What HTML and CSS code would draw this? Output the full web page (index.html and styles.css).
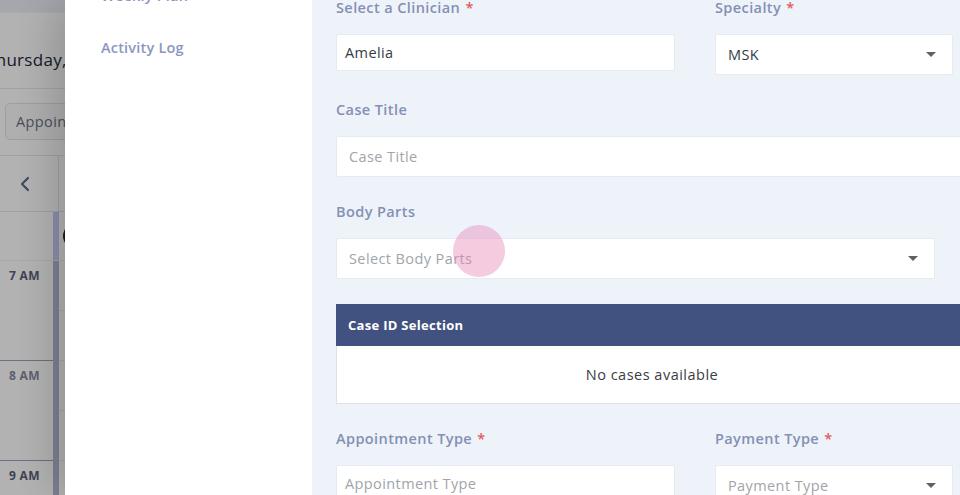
FILE: index.html
```html
<!DOCTYPE html>
<html lang="en">
<head>
<meta charset="utf-8">
<title>Appointment</title>
<link rel="stylesheet" href="styles.css">
</head>
<body>
<div class="calendar">
  <div class="cal-top"></div>
  <div class="cal-date"><span class="date-text">Thursday,</span></div>
  <div class="cal-toolbar"><button class="view-btn">Appointments</button></div>
  <div class="cal-nav">
    <span class="nav-prev"><svg width="12" height="16" viewBox="0 0 12 16"><path d="M9 2 L3 8 L9 14" fill="none" stroke="#5a6a8c" stroke-width="2.2" stroke-linecap="round" stroke-linejoin="round"/></svg></span>
    <span class="nav-sep"></span>
  </div>
  <div class="cal-grid">
    <div class="cal-head"><div class="time-head"></div><div class="bar bar-head"></div><div class="day-head"><span class="avatar"></span></div></div>
    <div class="cal-row"><div class="time">7 AM</div><div class="bar"></div><div class="slot"><div class="half"></div><div class="half"></div></div></div>
    <div class="cal-row"><div class="time time-muted">8 AM</div><div class="bar"></div><div class="slot"><div class="half"></div><div class="half"></div></div></div>
    <div class="cal-row"><div class="time">9 AM</div><div class="bar"></div><div class="slot"><div class="half"></div><div class="half"></div></div></div>
  </div>
</div>
<div class="backdrop"></div>
<aside class="drawer">
  <nav class="drawer-nav">
    <a class="nav-item">Weekly Plan</a>
    <a class="nav-item">Activity Log</a>
  </nav>
  <section class="drawer-form">
    <div class="form">
      <div class="row-2">
        <div class="group col-a">
          <label class="label">Select a Clinician <span class="req">*</span></label>
          <div class="control control-sm"><span class="value">Amelia</span></div>
        </div>
        <div class="group col-b">
          <label class="label">Specialty <span class="req">*</span></label>
          <div class="control select pad-lg"><span class="value">MSK</span><span class="caret"></span></div>
        </div>
      </div>
      <div class="group full">
        <label class="label">Case Title</label>
        <div class="control pad-lg"><span class="placeholder">Case Title</span></div>
      </div>
      <div class="group body-parts">
        <label class="label">Body Parts</label>
        <div class="control select pad-lg body-select"><span class="placeholder">Select Body Parts</span><span class="caret"></span></div>
      </div>
      <div class="case-table">
        <div class="case-head">Case ID Selection</div>
        <div class="case-body">No cases available</div>
      </div>
      <div class="row-2">
        <div class="group col-a">
          <label class="label">Appointment Type <span class="req">*</span></label>
          <div class="control control-sm"><span class="placeholder">Appointment Type</span></div>
        </div>
        <div class="group col-b">
          <label class="label">Payment Type <span class="req">*</span></label>
          <div class="control select pad-lg"><span class="placeholder">Payment Type</span><span class="caret"></span></div>
        </div>
      </div>
    </div>
  </section>
</aside>
<div class="tap-indicator"></div>
</body>
</html>
```
FILE: styles.css
```css
* { box-sizing: border-box; margin: 0; padding: 0; }
html, body { width: 960px; height: 495px; overflow: hidden; }
body {
  font-family: "Open Sans", "Liberation Sans", sans-serif;
  background: #fff;
  position: relative;
  color: #333;
}

/* ---------- background calendar ---------- */
.calendar { width: 960px; display: flex; flex-direction: column; background: #fff; }
.cal-top { height: 13px; background: #eceff6; border-bottom: 1px solid #f5f6f9; }
.cal-date { height: 75px; padding-top: 36px; }
.date-text {
  display: block;
  font-size: 17px;
  line-height: 22px;
  font-weight: 500;
  letter-spacing: 0.3px;
  color: #23273a;
  text-indent: -14px;
  white-space: nowrap;
}
.cal-toolbar { height: 67px; border-top: 1px solid #e8e9ed; padding: 14px 0 0 5px; }
.view-btn {
  height: 37px;
  width: 140px;
  padding-left: 10px;
  text-align: left;
  font-family: inherit;
  font-size: 14.5px;
  letter-spacing: 0.4px;
  color: #6a7184;
  background: #fbfbfb;
  border: 1px solid #e0e2e7;
  border-radius: 5px;
}
.cal-nav { height: 56px; border-top: 1px solid #e4e6eb; display: flex; align-items: center; }
.nav-prev { width: 58px; padding-left: 19px; display: flex; align-items: center; }
.nav-sep { width: 1px; align-self: stretch; background: #e2e4ea; }

.cal-grid { display: flex; flex-direction: column; border-top: 1px solid #e4e6eb; }
.cal-head { height: 49px; display: flex; border-bottom: 1px solid #eef0f4; }
.time-head { width: 53px; }
.bar { width: 6px; background: #b3b8d4; }
.bar-head { background: #c6ccf6; }
.day-head { flex: 1; display: flex; align-items: center; padding-left: 4px; }
.avatar { width: 24px; height: 24px; border-radius: 50%; background: #26232c; }

.cal-row { height: 100px; display: flex; }
.time {
  width: 53px;
  padding: 7px 0 0 9px;
  font-size: 12px;
  font-weight: 700;
  line-height: 16px;
  letter-spacing: 0.3px;
  color: #5a6277;
  border-bottom: 1px solid #9a9fb6;
}
.time-muted { color: #848aa0; }
.slot { flex: 1; display: flex; flex-direction: column; }
.half { flex: 1; border-bottom: 1px solid #ecedf1; }

.backdrop {
  position: fixed;
  inset: 0;
  background: rgba(0, 0, 0, 0.3);
}

/* ---------- drawer ---------- */
.drawer {
  position: fixed;
  top: 0;
  bottom: 0;
  left: 65px;
  right: 0;
  display: flex;
  box-shadow: -12px 0 40px rgba(0, 0, 0, 0.18);
}
.drawer-nav {
  width: 247px;
  background: #fff;
  padding: 0 0 0 36px;
  display: flex;
  flex-direction: column;
  gap: 32px;
  margin-top: -14px;
}
.nav-item {
  font-size: 14.5px;
  line-height: 20px;
  font-weight: 600;
  letter-spacing: 0.2px;
  color: #8b97c1;
}
.drawer-form {
  flex: 1;
  background: #eef3fa;
  padding-left: 24px;
  overflow: hidden;
}
.form { width: 632px; margin-top: -3px; }

.row-2 { display: flex; column-gap: 40px; }
.col-a { width: 339px; }
.col-b { width: 238px; }
.group { margin-bottom: 24px; }
.full { width: 632px; }
.body-parts { width: 599px; margin-bottom: 25px; }

.label {
  display: block;
  font-size: 14.5px;
  line-height: 21px;
  font-weight: 600;
  letter-spacing: 0.4px;
  color: #8490b4;
  margin-bottom: 16px;
}
.req { color: #e45a5a; margin-left: 1px; }

.control {
  height: 41px;
  background: #fff;
  border: 1px solid #e6eaf1;
  border-radius: 2px;
  display: flex;
  align-items: center;
  padding: 0 16px 0 12px;
  font-size: 14.5px;
  letter-spacing: 0.4px;
}
.control-sm { height: 37px; padding-left: 8px; }
.pad-lg { padding-left: 12px; }
.value { color: #363a44; }
.placeholder { color: #a2a4aa; }
.select { justify-content: space-between; }
.caret {
  width: 0;
  height: 0;
  border-left: 5px solid transparent;
  border-right: 5px solid transparent;
  border-top: 5px solid #5f6166;
}

.case-table { width: 632px; margin-bottom: 24px; }
.case-head {
  height: 42px;
  background: #415180;
  color: #fff;
  font-size: 13px;
  font-weight: 700;
  letter-spacing: 0.3px;
  display: flex;
  align-items: center;
  padding-left: 12px;
}
.case-body {
  height: 58px;
  background: #fff;
  border: 1px solid #dde2ea;
  border-top: none;
  display: flex;
  align-items: center;
  justify-content: center;
  font-size: 14.5px;
  letter-spacing: 0.5px;
  color: #3a3d44;
}

.tap-indicator {
  position: fixed;
  left: 453px;
  top: 225px;
  width: 52px;
  height: 52px;
  border-radius: 50%;
  background: rgba(230, 130, 180, 0.42);
}
```
